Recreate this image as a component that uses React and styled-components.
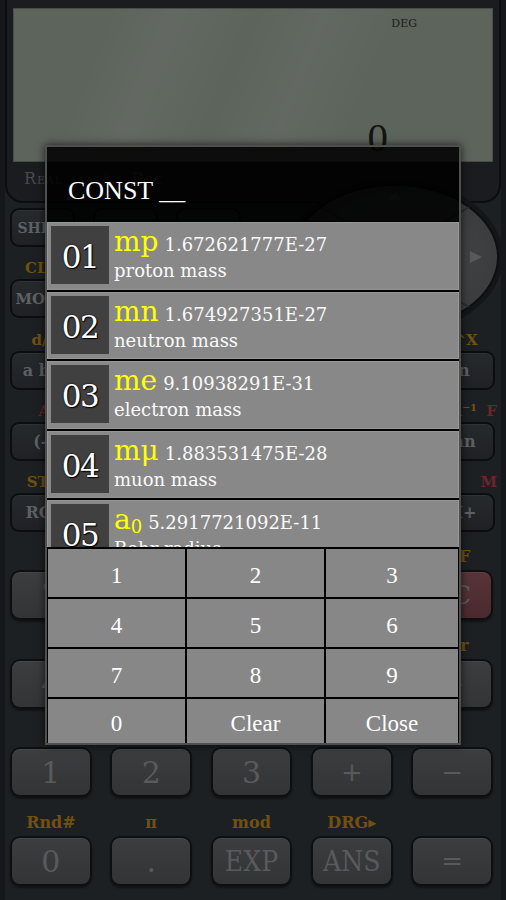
import React from "react";
import styled, { createGlobalStyle } from "styled-components";

const SERIF = `"DejaVu Serif", "Liberation Serif", serif`;
const TIMES = `"Liberation Serif", "DejaVu Serif", serif`;
const COND = `"DejaVu Serif Condensed", "DejaVu Serif", serif`;

const Global = createGlobalStyle`
  html, body { margin: 0; padding: 0; background: #1c1f22; }
  #root { width: 506px; height: 900px; }
`;

const Calc = styled.div`
  position: relative;
  width: 506px;
  height: 900px;
  overflow: hidden;
  box-sizing: border-box;
  padding: 0 5px;
  background: #1d2023;
  box-shadow: inset 5px 0 0 #15171a, inset -5px 0 0 #15171a;
  display: flex;
  flex-direction: column;
  font-family: ${SERIF};
`;

const Frame = styled.div`
  flex: none;
  height: 203px;
  box-sizing: border-box;
  border: 2px solid #0c0d0e;
  border-top: none;
  border-radius: 0 0 18px 18px;
  background: #1a1c1f;
  padding: 8px 6px 0;
  display: flex;
  flex-direction: column;
`;

const Lcd = styled.div`
  height: 154px;
  box-sizing: border-box;
  border: 1px solid #474d47;
  background: linear-gradient(
      112deg,
      rgba(255, 255, 255, 0) 18%,
      rgba(255, 255, 255, 0.035) 30%,
      rgba(255, 255, 255, 0) 45%,
      rgba(255, 255, 255, 0.03) 58%,
      rgba(255, 255, 255, 0) 72%
    ),
    #5d645c;
  display: flex;
  flex-direction: column;
  justify-content: space-between;
`;

const Indicators = styled.div`
  display: flex;
  justify-content: flex-end;
  padding: 8px 75px 0 0;
  font-size: 11px;
  line-height: 13px;
  color: #1a1c1a;
`;

const Readout = styled.div`
  display: flex;
  justify-content: flex-end;
  padding-right: 104px;
  font-family: ${TIMES};
  font-size: 41px;
  color: #121412;
`;

const Status = styled.div`
  flex: 1;
  display: flex;
  align-items: center;
  gap: 14px;
  padding: 0 0 6px 11px;
  font-size: 16px;
  font-variant: small-caps;
  letter-spacing: 1px;
  color: #474a4d;
`;

const TopSection = styled.div`
  flex: none;
  margin-top: 5px;
  padding-left: 5px;
  display: flex;
  justify-content: space-between;
  align-items: flex-start;
`;

const TopGrid = styled.div`
  display: grid;
  grid-template-columns: repeat(3, 65px);
  column-gap: 18px;
  row-gap: 10px;
`;

const DpadArt = styled.svg`
  flex: none;
  display: block;
  margin: -31px 0 -19px;
`;

const SmallSection = styled.div`
  flex: none;
  margin-top: 11px;
  padding: 0 6px 0 5px;
  display: grid;
  grid-template-columns: repeat(6, 1fr);
  column-gap: 15px;
  row-gap: 10px;
`;

const BigSection = styled.div`
  flex: none;
  margin-top: 16px;
  padding: 0 8px 0 5px;
  display: grid;
  grid-template-columns: repeat(5, 1fr);
  column-gap: 18.5px;
  row-gap: 16.7px;
`;

const KeyCol = styled.div`
  display: flex;
  flex-direction: column;
  align-items: stretch;
  min-width: 0;
`;

const KeyLabel = styled.div`
  height: 22px;
  line-height: ${(p) => (p.$big ? "18px" : "22px")};
  display: flex;
  justify-content: ${(p) => (p.$split ? "space-between" : "center")};
  padding: ${(p) => (p.$split ? "0 0 0 8px" : "0")};
  margin-right: ${(p) => (p.$split ? "-2px" : "0")};
  font-size: ${(p) => (p.$big ? "16px" : "15px")};
  font-weight: bold;
  white-space: nowrap;
`;

const Shift = styled.span`
  color: #72500f;
`;

const Alpha = styled.span`
  color: #6c2528;
`;

const SmallKey = styled.div`
  height: 39px;
  box-sizing: border-box;
  border: 2px solid #0c0d0e;
  border-radius: 9px;
  background: linear-gradient(#272a2d, #1f2124);
  box-shadow: inset 0 1px 0 rgba(255, 255, 255, 0.04);
  display: flex;
  align-items: center;
  justify-content: center;
  color: #5e6063;
  font-weight: bold;
  font-size: ${(p) => p.$size || 16}px;
  white-space: nowrap;
`;

const BigKey = styled.div`
  height: 50px;
  box-sizing: border-box;
  border: 2px solid #0e0f10;
  border-radius: 10px;
  background: ${(p) =>
    p.$red
      ? "linear-gradient(#583439, #4a2a2f)"
      : "linear-gradient(#3c3d3f, #333436)"};
  box-shadow: 0 2px 2px rgba(0, 0, 0, 0.45), inset 0 1px 0 rgba(255, 255, 255, 0.05);
  display: flex;
  align-items: center;
  justify-content: center;
  color: #595a5c;
  font-family: ${(p) => (p.$cond ? COND : SERIF)};
  font-size: ${(p) => p.$size || 30}px;
  white-space: nowrap;
`;

/* ---------- dialog ---------- */

const Dialog = styled.div`
  position: absolute;
  left: 45px;
  top: 145px;
  width: 416px;
  height: 600px;
  box-sizing: border-box;
  border: 2px solid #4f4f4f;
  display: flex;
  flex-direction: column;
  box-shadow: 0 0 8px rgba(0, 0, 0, 0.7);
`;

const Header = styled.div`
  flex: none;
  height: 74px;
  box-sizing: border-box;
  background: rgba(0, 0, 0, 0.87);
  display: flex;
  align-items: flex-end;
  padding: 0 0 15px 21px;
  color: #ffffff;
  font-family: ${TIMES};
  font-size: 26px;
`;

const List = styled.div`
  flex: none;
  height: 326px;
  box-sizing: border-box;
  padding-top: 1px;
  background: #000;
  overflow: hidden;
  display: flex;
  flex-direction: column;
  gap: 2px;
`;

const Item = styled.div`
  flex: none;
  height: 67.5px;
  box-sizing: border-box;
  padding: 4px;
  display: flex;
  gap: 5px;
  background: #888888;
  box-shadow: inset 0 0 0 1px #979797;
`;

const NumBox = styled.div`
  flex: none;
  width: 58px;
  height: 58px;
  box-sizing: border-box;
  padding-top: 4px;
  background: #404040;
  display: flex;
  align-items: center;
  justify-content: center;
  color: #fff;
  font-size: 31px;
  letter-spacing: -1.5px;
  text-shadow: 0 0 2px #000, 1px 1px 1px #000;
`;

const Info = styled.div`
  display: flex;
  flex-direction: column;
  min-width: 0;
`;

const Line1 = styled.div`
  height: 32px;
  display: flex;
  align-items: baseline;
  gap: 6px;
  white-space: nowrap;
`;

const Sym = styled.span`
  color: #ffff00;
  font-size: 28px;
  line-height: 32px;
  sub {
    font-size: 18px;
    vertical-align: -4px;
    line-height: 0;
  }
`;

const Val = styled.span`
  color: #fafafa;
  font-size: 18px;
  line-height: 22px;
`;

const Desc = styled.div`
  margin-top: 2px;
  color: #fafafa;
  font-size: 18px;
  line-height: 22px;
  white-space: nowrap;
`;

const Pad = styled.div`
  flex: 1;
  background: #000;
  box-sizing: border-box;
  padding: 2px 1px 0;
  display: grid;
  grid-template-columns: 137px 137px 1fr;
  grid-template-rows: 48px 48px 48px 1fr;
  gap: 2px;
`;

const PadKey = styled.div`
  background: #878787;
  box-sizing: border-box;
  padding-top: 5px;
  display: flex;
  align-items: center;
  justify-content: center;
  color: #fff;
  font-family: ${TIMES};
  font-size: 23px;
`;

/* ---------- data ---------- */

const TOP_ROW = ["SHIFT", "ALPHA", "ON"];
const TOP_ROW2 = [
  { t: "MODE", s: "CLR" },
  { t: "CALC", s: "SOLVE" },
  { t: "∫dx", s: "d/dx" },
];

const SMALL_ROWS = [
  { t: "a b/c", s: "d/c" },
  { t: "√", s: "∛" },
  { t: "x²", s: "x³" },
  { t: "x^", s: "ˣ√" },
  { t: "log", s: "10ˣ" },
  { t: "ln", s: "e^X" },
  { t: "(-)", a: "A" },
  { t: "°'\"", a: "B" },
  { t: "hyp", a: "C" },
  { t: "sin", s: "sin⁻¹", a: "D" },
  { t: "cos", s: "cos⁻¹", a: "E" },
  { t: "tan", s: "tan⁻¹", a: "F" },
  { t: "RCL", s: "STO" },
  { t: "ENG", s: "←" },
  { t: "(", s: "" },
  { t: ")", a: "X" },
  { t: "S⇔D", a: "Y" },
  { t: "M+", s: "M-", a: "M" },
];

const BIG_ROWS = [
  { t: "7" },
  { t: "8" },
  { t: "9" },
  { t: "DEL", s: "INS", size: 24, cond: true },
  { t: "AC", s: "OFF", size: 26, red: true },
  { t: "4" },
  { t: "5" },
  { t: "6" },
  { t: "×", s: "nPr" },
  { t: "÷", s: "nCr" },
  { t: "1" },
  { t: "2" },
  { t: "3" },
  { t: "+", s: "Pol", size: 26 },
  { t: "−", size: 26 },
  { t: "0", s: "Rnd#" },
  { t: ".", s: "π" },
  { t: "EXP", s: "mod", size: 28, cond: true },
  { t: "ANS", s: "DRG▸", size: 28, cond: true },
  { t: "=", size: 26 },
];

const CONSTS = [
  { n: "01", sym: "mp", val: "1.672621777E-27", desc: "proton mass" },
  { n: "02", sym: "mn", val: "1.674927351E-27", desc: "neutron mass" },
  { n: "03", sym: "me", val: "9.10938291E-31", desc: "electron mass" },
  { n: "04", sym: "mμ", val: "1.883531475E-28", desc: "muon mass" },
  { n: "05", sym: "a", sub: "0", val: "5.2917721092E-11", desc: "Bohr radius" },
  { n: "06", sym: "h", val: "6.62606957E-34", desc: "Planck constant" },
];

const PAD = ["1", "2", "3", "4", "5", "6", "7", "8", "9", "0", "Clear", "Close"];

function Labels({ s, a, big }) {
  return (
    <KeyLabel $big={big} $split={Boolean(s && a)}>
      {s ? <Shift>{s}</Shift> : null}
      {a ? <Alpha>{a}</Alpha> : null}
    </KeyLabel>
  );
}

function Dpad() {
  return (
    <DpadArt width="220" height="160" viewBox="0 0 220 160">
      <defs>
        <radialGradient id="dpadFill" cx="0.55" cy="0.5" r="0.6">
          <stop offset="0" stopColor="#46484a" />
          <stop offset="1" stopColor="#37393b" />
        </radialGradient>
      </defs>
      <ellipse cx="114" cy="80" rx="108" ry="78" fill="#141619" />
      <ellipse
        cx="114"
        cy="80"
        rx="103"
        ry="72"
        fill="url(#dpadFill)"
        stroke="#0e0f10"
        strokeWidth="2"
      />
      <path
        d="M40 30 L84 56 M188 30 L144 56 M40 130 L84 104 M188 130 L144 104"
        stroke="#2a2c2e"
        strokeWidth="2"
      />
      <path d="M189 74 L201 80 L189 86 Z" fill="#57595c" />
      <path d="M39 74 L27 80 L39 86 Z" fill="#57595c" />
      <path d="M107 23 L114 15 L121 23 Z" fill="#57595c" />
      <path d="M107 137 L114 145 L121 137 Z" fill="#57595c" />
    </DpadArt>
  );
}

export default function App() {
  return (
    <>
      <Global />
      <Calc>
        <Frame>
          <Lcd>
            <Indicators>DEG</Indicators>
            <Readout>0</Readout>
          </Lcd>
          <Status>
            <span>Real</span>
            <span>a b/c</span>
            <span>Dec</span>
          </Status>
        </Frame>

        <TopSection>
          <TopGrid>
            {TOP_ROW.map((t) => (
              <SmallKey key={t} $size={14}>
                {t}
              </SmallKey>
            ))}
            {TOP_ROW2.map((k) => (
              <KeyCol key={k.t}>
                <Labels s={k.s} a={k.a} />
                <SmallKey $size={15}>{k.t}</SmallKey>
              </KeyCol>
            ))}
          </TopGrid>
          <Dpad />
        </TopSection>

        <SmallSection>
          {SMALL_ROWS.map((k, i) => (
            <KeyCol key={i}>
              <Labels s={k.s} a={k.a} />
              <SmallKey>{k.t}</SmallKey>
            </KeyCol>
          ))}
        </SmallSection>

        <BigSection>
          {BIG_ROWS.map((k, i) => (
            <KeyCol key={i}>
              <Labels s={k.s} a={k.a} big />
              <BigKey $size={k.size} $red={k.red} $cond={k.cond}>
                {k.t}
              </BigKey>
            </KeyCol>
          ))}
        </BigSection>

        <Dialog>
          <Header>CONST __</Header>
          <List>
            {CONSTS.map((c) => (
              <Item key={c.n}>
                <NumBox>{c.n}</NumBox>
                <Info>
                  <Line1>
                    <Sym>
                      {c.sym}
                      {c.sub ? <sub>{c.sub}</sub> : null}
                    </Sym>
                    <Val>{c.val}</Val>
                  </Line1>
                  <Desc>{c.desc}</Desc>
                </Info>
              </Item>
            ))}
          </List>
          <Pad>
            {PAD.map((p) => (
              <PadKey key={p}>{p}</PadKey>
            ))}
          </Pad>
        </Dialog>
      </Calc>
    </>
  );
}
